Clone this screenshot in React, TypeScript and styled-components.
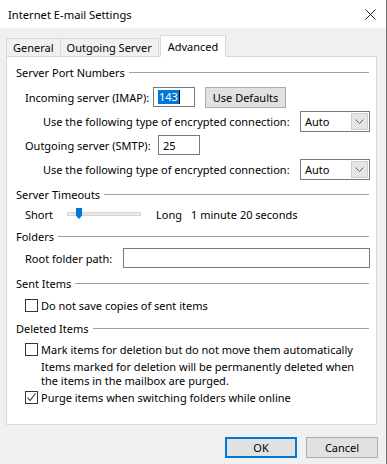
import React from 'react'
import styled, {createGlobalStyle} from 'styled-components'

const GlobalStyle = createGlobalStyle`
  *, *::before, *::after {
    box-sizing: border-box;
  }
  html, body {
    margin: 0;
    padding: 0;
    background: #f0f0f0;
  }
  body {
    font-family: 'Noto Sans', 'Open Sans', sans-serif;
    font-size: 11px;
    color: #000;
  }
`

const Window = styled.div`
  width: 387px;
  height: 464px;
  display: flex;
  flex-direction: column;
  background: #f0f0f0;
  border-right: 1px solid #6f6f6f;
  overflow: hidden;
`
const TitleBar = styled.div`
  height: 28px;
  flex-shrink: 0;
  display: flex;
  align-items: center;
  justify-content: space-between;
  background: #fff;
  padding: 0 10px 0 8px;
  font-size: 11.2px;
`
const TabStrip = styled.div`
  display: flex;
  align-items: flex-end;
  height: 20px;
  flex-shrink: 0;
  margin-top: 8px;
  padding-left: 6px;
  position: relative;
  z-index: 1;
`
const Tab = styled.div<{$active?: boolean}>`
  height: ${({$active}) => ($active ? '22px' : '19px')};
  padding: 0 ${({$active}) => ($active ? '7px' : '6px')};
  display: flex;
  align-items: center;
  background: ${({$active}) => ($active ? '#fff' : '#f0f0f0')};
  border: 1px solid #d9d9d9;
  border-bottom: ${({$active}) => ($active ? '1px solid #fff' : '1px solid #d9d9d9')};
  margin-left: ${({$active}) => ($active ? '1px' : '-1px')};
  margin-bottom: -1px;
  &:first-child {
    margin-left: 0;
  }
`
const Panel = styled.div`
  height: 369px;
  flex-shrink: 0;
  margin: 0 9px 0 6px;
  background: #fff;
  border: 1px solid #d9d9d9;
  padding: 7px 6px 0 9px;
  display: flex;
  flex-direction: column;
`
const GroupHeader = styled.div<{$mt: number}>`
  height: 16px;
  margin-top: ${({$mt}) => $mt}px;
  display: flex;
  align-items: center;
  gap: 4px;
  white-space: nowrap;
  &::after {
    content: '';
    flex: 1;
    height: 1px;
    background: #a0a0a0;
    margin-right: 1px;
  }
`
const Row = styled.div<{$h: number; $mt?: number; $indent?: number}>`
  height: ${({$h}) => $h}px;
  margin-top: ${({$mt = 0}) => $mt}px;
  padding-left: ${({$indent = 9}) => $indent}px;
  display: flex;
  align-items: center;
  white-space: nowrap;
`
const Label = styled.span<{$w?: number}>`
  width: ${({$w}) => ($w ? `${$w}px` : 'auto')};
  flex-shrink: 0;
`
const TextBox = styled.div<{$w?: number}>`
  width: ${({$w}) => ($w ? `${$w}px` : 'auto')};
  flex: ${({$w}) => ($w ? '0 0 auto' : '1')};
  height: 20px;
  border: 1px solid #7a7a7a;
  display: flex;
  align-items: center;
  padding-left: 4px;
`
const Selected = styled.span`
  background: #0078d7;
  color: #fff;
  line-height: 14px;
  padding: 0 1px;
`
const Caret = styled.span`
  display: inline-block;
  width: 1px;
  height: 14px;
  background: #000;
`
const Button = styled.div<{$w: number; $default?: boolean; $ml?: number}>`
  width: ${({$w}) => $w}px;
  height: 21px;
  margin-left: ${({$ml = 0}) => $ml}px;
  display: flex;
  align-items: center;
  justify-content: center;
  background: #e1e1e1;
  border: ${({$default}) => ($default ? '2px solid #0078d7' : '1px solid #adadad')};
`
const Select = styled.div`
  margin-left: auto;
  width: 70px;
  height: 21px;
  border: 1px solid #7a7a7a;
  display: flex;
  align-items: center;
  justify-content: space-between;
  padding: 0 1px 0 4px;
`
const DropArrow = styled.div`
  width: 17px;
  height: 17px;
  background: #e5e5e5;
  border: 1px solid #cfcfcf;
  display: flex;
  align-items: center;
  justify-content: center;
`
const SliderTrack = styled.div`
  position: relative;
  width: 74px;
  height: 4px;
  margin: 0 15px 0 10px;
  background: #e7e7e7;
  border: 1px solid #d6d6d6;
`
const SliderThumb = styled.div`
  position: absolute;
  left: 8px;
  top: -5px;
  width: 6px;
  height: 11px;
  background: #0078d7;
  clip-path: polygon(0 0, 100% 0, 100% 70%, 50% 100%, 0 70%);
`
const CheckBox = styled.div`
  width: 13px;
  height: 13px;
  border: 1px solid #333;
  background: #fff;
  margin-right: 3px;
  flex-shrink: 0;
  display: flex;
  align-items: center;
  justify-content: center;
`
const Note = styled.div`
  margin-top: 1px;
  padding-left: 25px;
  line-height: 14px;
  white-space: nowrap;
`
const Footer = styled.div`
  display: flex;
  justify-content: flex-end;
  gap: 9px;
  padding: 12px 8px 0 0;
`

const Chevron = () => (
  <svg width="9" height="5" viewBox="0 0 9 5">
    <path d="M0.5 0.5 L4.5 4.5 L8.5 0.5" fill="none" stroke="#606060" strokeWidth="1" />
  </svg>
)

const Check = () => (
  <svg width="11" height="11" viewBox="0 0 11 11">
    <path d="M1.5 5.5 L4 8.5 L9.5 1.5" fill="none" stroke="#222" strokeWidth="1.1" />
  </svg>
)

const CloseIcon = () => (
  <svg width="11" height="11" viewBox="0 0 11 11">
    <path d="M0.5 0.5 L10.5 10.5 M10.5 0.5 L0.5 10.5" stroke="#222" strokeWidth="1" />
  </svg>
)

const App = () => {
  return (
    <>
      <GlobalStyle />
      <Window>
        <TitleBar>
          <span>Internet E-mail Settings</span>
          <CloseIcon />
        </TitleBar>
        <TabStrip>
          <Tab>General</Tab>
          <Tab>Outgoing Server</Tab>
          <Tab $active>Advanced</Tab>
        </TabStrip>
        <Panel>
          <GroupHeader $mt={0}>Server Port Numbers</GroupHeader>
          <Row $h={24} $mt={5}>
            <Label $w={128}>Incoming server (IMAP):</Label>
            <TextBox $w={42}>
              <Selected>143</Selected>
              <Caret />
            </TextBox>
            <Button $w={81} $ml={10}>Use Defaults</Button>
          </Row>
          <Row $h={24} $indent={27}>
            <Label>Use the following type of encrypted connection:</Label>
            <Select>
              Auto
              <DropArrow><Chevron /></DropArrow>
            </Select>
          </Row>
          <Row $h={24}>
            <Label $w={133}>Outgoing server (SMTP):</Label>
            <TextBox $w={42}>25</TextBox>
          </Row>
          <Row $h={24} $indent={27}>
            <Label>Use the following type of encrypted connection:</Label>
            <Select>
              Auto
              <DropArrow><Chevron /></DropArrow>
            </Select>
          </Row>

          <GroupHeader $mt={5}>Server Timeouts</GroupHeader>
          <Row $h={20} $mt={2}>
            <Label $w={32}>Short</Label>
            <SliderTrack>
              <SliderThumb />
            </SliderTrack>
            <Label $w={35}>Long</Label>
            <Label>1 minute 20 seconds</Label>
          </Row>

          <GroupHeader $mt={4}>Folders</GroupHeader>
          <Row $h={22} $mt={3}>
            <Label $w={98}>Root folder path:</Label>
            <TextBox />
          </Row>

          <GroupHeader $mt={6}>Sent Items</GroupHeader>
          <Row $h={20} $mt={4}>
            <CheckBox />
            <Label>Do not save copies of sent items</Label>
          </Row>

          <GroupHeader $mt={5}>Deleted Items</GroupHeader>
          <Row $h={20} $mt={3}>
            <CheckBox />
            <Label>Mark items for deletion but do not move them automatically</Label>
          </Row>
          <Note>
            Items marked for deletion will be permanently deleted when
            <br />
            the items in the mailbox are purged.
          </Note>
          <Row $h={18}>
            <CheckBox>
              <Check />
            </CheckBox>
            <Label>Purge items when switching folders while online</Label>
          </Row>
        </Panel>
        <Footer>
          <Button $w={72} $default>OK</Button>
          <Button $w={72}>Cancel</Button>
        </Footer>
      </Window>
    </>
  )
}

export default App
